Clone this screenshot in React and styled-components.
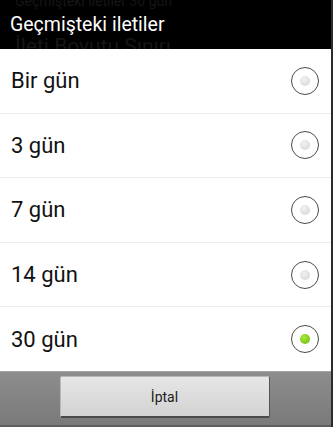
import React from "react";
import styled, { createGlobalStyle } from "styled-components";

const Global = createGlobalStyle`
  html, body { margin: 0; padding: 0; background: #000; }
  body { font-family: Roboto, "Noto Sans", "Liberation Sans", sans-serif; }
  * { box-sizing: border-box; }
`;

const Screen = styled.div`
  width: 333px;
  height: 427px;
  display: flex;
  flex-direction: column;
  border-right: 2px solid #2c2c2c;
  overflow: hidden;
`;

const Header = styled.div`
  position: relative;
  height: 49px;
  flex: 0 0 49px;
  background: #000;
  overflow: hidden;
  display: flex;
  align-items: center;
  padding-left: 10px;
`;

const Ghost = styled.div`
  position: absolute;
  left: ${(p) => p.$left}px;
  top: ${(p) => p.$top}px;
  font-size: ${(p) => p.$size}px;
  color: #161616;
  white-space: nowrap;
  line-height: 1;
`;

const Title = styled.h1`
  position: relative;
  margin: 0;
  font-size: 19.5px;
  font-weight: 400;
  color: #fff;
  line-height: 1;
  padding-top: 1px;
`;

const List = styled.div`
  flex: 1;
  display: flex;
  flex-direction: column;
  background: #fff;
`;

const Row = styled.div`
  flex: 1;
  display: flex;
  align-items: center;
  justify-content: space-between;
  padding: 0 12px 0 11px;
  border-top: ${(p) => (p.$first ? "none" : "1px solid #ebebeb")};
`;

const Label = styled.span`
  font-size: 22px;
  color: #111;
`;

const Radio = styled.span`
  width: 28px;
  height: 28px;
  border-radius: 50%;
  border: 1.7px solid #4a4a4a;
  display: flex;
  align-items: center;
  justify-content: center;
  background: #fff;
`;

const Dot = styled.span`
  width: 10px;
  height: 10px;
  border-radius: 50%;
  background: ${(p) =>
    p.$checked
      ? "radial-gradient(circle at 40% 35%, #a8ec3c, #7cc51a 70%, #6aa814)"
      : "radial-gradient(circle at 40% 35%, #f2f2f2, #dadada 75%, #cfcfcf)"};
`;

const Footer = styled.div`
  flex: 0 0 56px;
  background: linear-gradient(#8d8d8d, #7a7a7a);
  border-top: 1px solid #a3a3a3;
  border-bottom: 2px solid #5e5e5e;
  display: flex;
  justify-content: center;
  padding-top: 4px;
`;

const Button = styled.button`
  width: 210px;
  height: 42px;
  margin-left: -2px;
  background: linear-gradient(#e6e6e6, #d3d3d3);
  border: 1px solid #b8b8b8;
  border-right-color: #555;
  border-bottom: 2px solid #4a4a4a;
  border-radius: 2px;
  font-family: Roboto, "Noto Sans", "Liberation Sans", sans-serif;
  font-size: 14px;
  color: #1c1c1c;
  padding: 0;
`;

const options = [
  { label: "Bir gün", checked: false },
  { label: "3 gün", checked: false },
  { label: "7 gün", checked: false },
  { label: "14 gün", checked: false },
  { label: "30 gün", checked: true },
];

export default function App() {
  return (
    <>
      <Global />
      <Screen>
        <Header>
          <Ghost $left={15} $top={-6} $size={14}>Geçmişteki iletiler 30 gün</Ghost>
          <Ghost $left={15} $top={36} $size={21}>İleti Boyutu Sınırı</Ghost>
          <Title>Geçmişteki iletiler</Title>
        </Header>
        <List>
          {options.map((o, i) => (
            <Row key={o.label} $first={i === 0}>
              <Label>{o.label}</Label>
              <Radio>
                <Dot $checked={o.checked} />
              </Radio>
            </Row>
          ))}
        </List>
        <Footer>
          <Button>İptal</Button>
        </Footer>
      </Screen>
    </>
  );
}
